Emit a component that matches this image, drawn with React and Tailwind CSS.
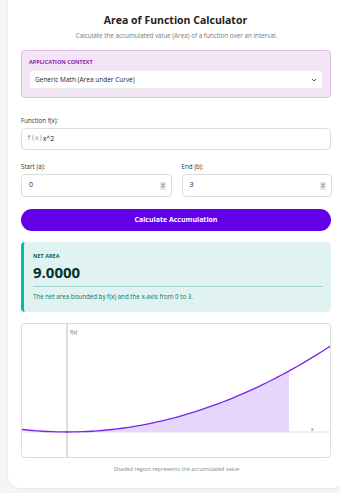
import React from 'react';

const W = 310;
const H = 134;
const Y0 = 45; // x = 0 column
const X0 = 108; // y = 0 row
const SX = 74;
const SY = 6.78;

function toPx(x) {
  return [Y0 + x * SX, X0 - x * x * SY];
}

function curvePath() {
  const pts = [];
  for (let px = 0; px <= W; px += 5) {
    const x = (px - Y0) / SX;
    const [, py] = toPx(x);
    pts.push(`${px},${py.toFixed(2)}`);
  }
  return 'M' + pts.join(' L');
}

function areaPath() {
  const pts = [];
  for (let i = 0; i <= 60; i++) {
    const x = (3 * i) / 60;
    const [px, py] = toPx(x);
    pts.push(`${px.toFixed(2)},${py.toFixed(2)}`);
  }
  return `M${Y0},${X0} L` + pts.join(' L') + ` L${toPx(3)[0]},${X0} Z`;
}

export default function App() {
  return (
    <div className="w-[340px] h-[493px] overflow-hidden bg-[#f5f5f5]" style={{ fontFamily: '"Open Sans", "Noto Sans", sans-serif' }}>
      <div className="ml-2 w-[337px] h-[488px] bg-white rounded-b-xl shadow-[0_1px_3px_rgba(0,0,0,0.06)] px-[13px] pt-[13px]">
        {/* HEADER */}
        <h1 className="text-center text-[10.5px] font-bold text-[#222] leading-[15px] -ml-[2px]">Area of Function Calculator</h1>
        <p className="text-center text-[6.3px] text-[#777] mt-[3px] leading-[9px]">Calculate the accumulated value (Area) of a function over an interval.</p>

        {/* CONTEXTO */}
        <div className="mt-[10px] w-[310px] h-[48px] bg-[#f3e5f5] border border-[#e1bee7] rounded-[4px] px-[7px] pt-[7px]">
          <div className="text-[5.5px] font-bold uppercase text-[#8e24aa] leading-[8px]">Application Context</div>
          <div className="mt-[4px] h-[19px] bg-white rounded-[3px] border border-[#eee] flex items-center justify-between pl-[5px] pr-[5px]">
            <span className="text-[6.5px] font-medium text-[#1a1a2e]">Generic Math (Area under Curve)</span>
            <svg width="6" height="4" viewBox="0 0 6 4"><path d="M1 1 L3 3 L5 1" stroke="#555" strokeWidth="1" fill="none" /></svg>
          </div>
        </div>

        {/* FUNCAO */}
        <div className="mt-[18px] text-[6.2px] text-[#333] leading-[9px]">Function f(x):</div>
        <div className="mt-[3px] w-[310px] h-[22px] border border-[#ddd] rounded-[4px] flex items-center pl-[5px]">
          <span className="text-[6.5px] text-[#6a8a9a]" style={{ fontFamily: '"DejaVu Sans Mono", monospace' }}>f(x)</span>
          <span className="text-[7px] text-[#222]">x^2</span>
        </div>

        <div className="mt-[12px] grid grid-cols-2 gap-[10px]">
          {[['Start (a):', '0'], ['End (b):', '3']].map(([lbl, val]) => (
            <div key={lbl}>
              <div className="text-[6.2px] text-[#333] leading-[9px]">{lbl}</div>
              <div className="mt-[3px] h-[23px] border border-[#ddd] rounded-[4px] flex items-center justify-between pl-[7px] pr-[5px]">
                <span className="text-[7px] text-[#222]">{val}</span>
                <div className="w-[6px] h-[8px] bg-[#e8e8e8] flex flex-col items-center justify-center gap-[1px]">
                  <svg width="4" height="2" viewBox="0 0 4 2"><path d="M0 2 L2 0 L4 2 Z" fill="#999" /></svg>
                  <svg width="4" height="2" viewBox="0 0 4 2"><path d="M0 0 L2 2 L4 0 Z" fill="#999" /></svg>
                </div>
              </div>
            </div>
          ))}
        </div>

        <button className="mt-[12px] w-[310px] h-[22px] rounded-full bg-[#6200ea] text-white text-[7px] font-bold">Calculate Accumulation</button>

        {/* RESULTADO */}
        <div className="mt-[11px] w-[310px] h-[70px] bg-[#e0f2f1] border-l-[3px] border-[#00bfa5] rounded-[4px] pl-[9px] pr-[8px] pt-[10px]">
          <div className="text-[5.5px] font-bold uppercase text-[#00695c] leading-[8px]">Net Area</div>
          <div className="text-[15px] font-bold text-[#00332c] leading-[20px] mt-[2px]">9.0000</div>
          <div className="mt-[4px] border-t border-[#a5d6cf]" />
          <div className="mt-[5px] text-[6.2px] text-[#00796b] leading-[9px]">The net area bounded by f(x) and the x-axis from 0 to 3.</div>
        </div>

        {/* GRAFICO */}
        <div className="mt-[11px] w-[310px] h-[135px] border border-[#ddd] rounded-[4px] overflow-hidden relative">
          <svg width={W} height={H} viewBox={`0 0 ${W} ${H}`} className="block">
            <line x1="0" y1={X0} x2={W} y2={X0} stroke="#eeeeee" strokeWidth="2" />
            <line x1={Y0} y1="0" x2={Y0} y2={H} stroke="#bbbbbb" strokeWidth="1" />
            <path d={areaPath()} fill="#e4d7fb" />
            <path d={curvePath()} stroke="#7c22ea" strokeWidth="1.3" fill="none" />
            <text x={Y0 + 3} y="10" fontSize="5" fill="#555" fontFamily="Open Sans, sans-serif">f(x)</text>
            <text x="289" y="107" fontSize="5" fill="#555" fontFamily="Open Sans, sans-serif">x</text>
          </svg>
        </div>
        <p className="mt-[7px] text-center text-[5.5px] text-[#888] leading-[8px]">Shaded region represents the accumulated value</p>
      </div>
    </div>
  );
}
